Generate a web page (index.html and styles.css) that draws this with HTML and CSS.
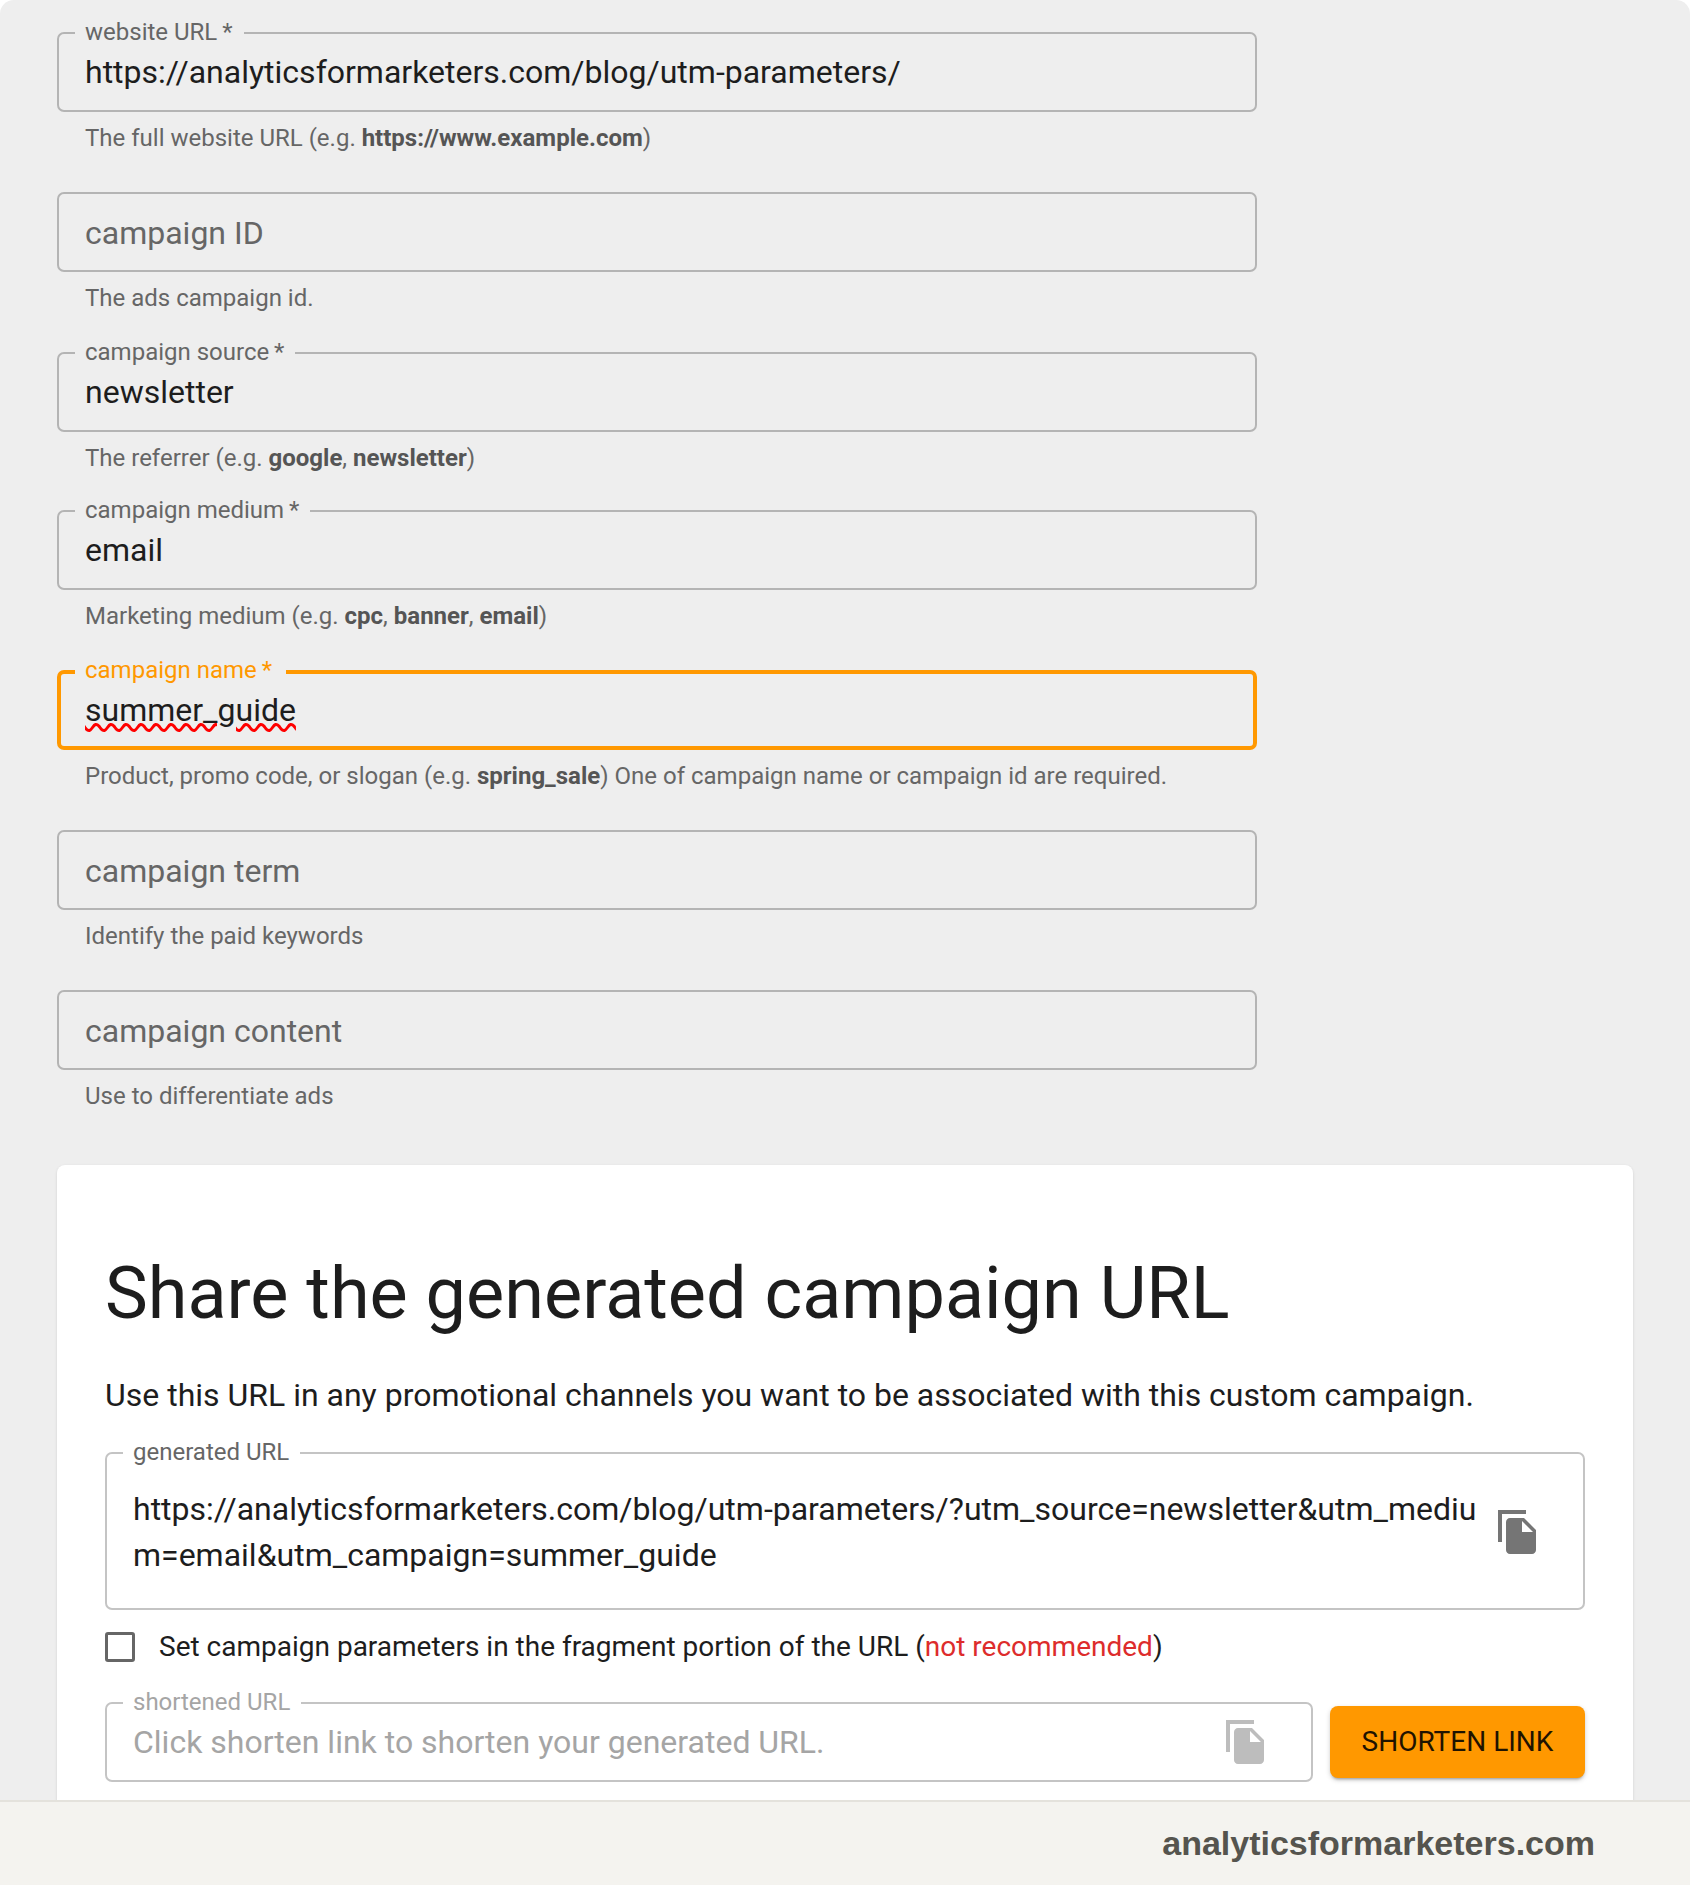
FILE: index.html
```html
<!DOCTYPE html>
<html lang="en">
  <head>
    <title>Campaign URL Builder</title>
    <link rel="stylesheet" href="styles.css">
  </head>

  <body>
    <div class="page">
      <main class="content">
        <form class="fields">
          <div class="group">
            <div class="field">
              <label class="field-label">website URL&thinsp;*</label>
              <span class="value">https://analyticsformarketers.com/blog/utm-parameters/</span>
            </div>
            <p class="helper">The full website URL (e.g. <b>https://www.example.com</b>)</p>
          </div>
          <div class="group">
            <div class="field">
              <span class="value empty">campaign ID</span>
            </div>
            <p class="helper">The ads campaign id.</p>
          </div>
          <div class="group">
            <div class="field">
              <label class="field-label">campaign source&thinsp;*</label>
              <span class="value">newsletter</span>
            </div>
            <p class="helper">The referrer (e.g. <b>google</b>, <b>newsletter</b>)</p>
          </div>
          <div class="group">
            <div class="field">
              <label class="field-label">campaign medium&thinsp;*</label>
              <span class="value">email</span>
            </div>
            <p class="helper">Marketing medium (e.g. <b>cpc</b>, <b>banner</b>, <b>email</b>)</p>
          </div>
          <div class="group">
            <div class="field focused">
              <label class="field-label">campaign name&thinsp;*</label>
              <span class="value misspelled">summer_guide</span>
            </div>
            <p class="helper">Product, promo code, or slogan (e.g. <b>spring_sale</b>) One of campaign name or campaign id are required.</p>
          </div>
          <div class="group">
            <div class="field">
              <span class="value empty">campaign term</span>
            </div>
            <p class="helper">Identify the paid keywords</p>
          </div>
          <div class="group">
            <div class="field">
              <span class="value empty">campaign content</span>
            </div>
            <p class="helper">Use to differentiate ads</p>
          </div>
        </form>

        <section class="card">
          <h2>Share the generated campaign URL</h2>
          <p class="lead">Use this URL in any promotional channels you want to be associated with this custom campaign.</p>

          <div class="field generated">
            <label class="field-label">generated URL</label>
            <span class="value">https://analyticsformarketers.com/blog/utm-parameters/?utm_source=newsletter&amp;utm_medium=email&amp;utm_campaign=summer_guide</span>
            <svg class="copy" viewBox="0 0 24 24"><path d="M16 1H2v16h2V3h12V1zm-1 4l6 6v10c0 1.1-.9 2-2 2H7.99C6.89 23 6 22.1 6 21l.01-14c0-1.1.89-2 1.99-2h7zm-1 7h5.5L14 6.5V12z"/></svg>
          </div>

          <div class="fragment">
            <span class="checkbox"></span>
            <span>Set campaign parameters in the fragment portion of the URL (<span class="warn">not recommended</span>)</span>
          </div>

          <div class="shorten">
            <div class="field disabled">
              <label class="field-label">shortened URL</label>
              <span class="value">Click shorten link to shorten your generated URL.</span>
              <svg class="copy" viewBox="0 0 24 24"><path d="M16 1H2v16h2V3h12V1zm-1 4l6 6v10c0 1.1-.9 2-2 2H7.99C6.89 23 6 22.1 6 21l.01-14c0-1.1.89-2 1.99-2h7zm-1 7h5.5L14 6.5V12z"/></svg>
            </div>
            <button type="button" class="shorten-btn">SHORTEN LINK</button>
          </div>
        </section>
      </main>

      <footer class="footer">analyticsformarketers.com</footer>
    </div>
  </body>
</html>
```

FILE: styles.css
```css
html {
  background-color: #fff;
}

body {
  margin: 0;
  font-family: Roboto, "Liberation Sans", sans-serif;
  color: #1d1d1d;
}

.page {
  display: flex;
  flex-flow: column;
  block-size: 1885px;
  border-radius: 14px 14px 0 0;
  overflow: hidden;
  background-color: #eee;
}

.content {
  flex: 1;
  min-block-size: 0;
  overflow: hidden;
  padding: 32px 58px 0 57px;
}

.fields {
  inline-size: 1200px;
}

.group {
  block-size: 160px;

  &:nth-child(3) {
    block-size: 158px;
  }
}

.field {
  position: relative;
  display: flex;
  align-items: center;
  box-sizing: border-box;
  block-size: 80px;
  padding-inline: 26px;
  border: 2px solid #b4b4b4;
  border-radius: 7px;
}

.field-label {
  position: absolute;
  top: -15px;
  left: 16px;
  padding-inline: 10px 11px;
  background-color: #eee;
  color: #666;
  font-size: 24px;
  line-height: 26px;
}

.value {
  font-size: 32px;
  line-height: 46px;
  margin-block-start: -1px;
}

.value.empty {
  color: #666;
  margin-block-start: 2px;
}

.misspelled {
  text-decoration: #f00 wavy underline;
  text-decoration-thickness: 3px;
  text-underline-offset: 2px;
}

.field.focused {
  border: 4px solid #ff9800;
  padding-inline: 24px;
}

.focused .field-label {
  top: -17px;
  left: 14px;
  padding-inline-end: 14px;
  color: #ff9800;
}

.helper {
  margin: 10px 0 0 28px;
  color: #666;
  font-size: 24px;
  line-height: 33px;

  b {
    color: #555;
    font-weight: 700;
  }
}

.card {
  box-sizing: border-box;
  inline-size: 1576px;
  margin-block-start: 15px;
  padding: 80px 48px 60px;
  border-radius: 8px;
  background-color: #fff;
  box-shadow: 0 1px 3px rgb(0 0 0 / 12%);

  .field {
    border-color: #c4c4c4;
  }

  .field-label {
    background-color: #fff;
  }

  h2 {
    margin: 0;
    font-size: 72px;
    font-weight: 400;
    line-height: 98px;
    color: #1d1d1d;
  }

  .lead {
    margin: 29px 0 0;
    font-size: 32px;
    line-height: 46px;
  }
}

.generated {
  block-size: 158px;
  margin-block-start: 34px;
  align-items: flex-start;
  padding-block-start: 32px;

  .value {
    flex: 1;
    word-break: break-all;
    margin: 0;
  }
}

.copy {
  flex: none;
  inline-size: 48px;
  block-size: 48px;
  fill: #757575;
}

.generated .copy {
  margin: 22px 15px 0 12px;
}

.fragment {
  display: flex;
  align-items: center;
  gap: 24px;
  margin-block-start: 18px;
  font-size: 28px;
  line-height: 38px;

  .warn {
    color: #dd2c2c;
  }
}

.checkbox {
  box-sizing: border-box;
  inline-size: 30px;
  block-size: 30px;
  border: 3px solid #666;
  border-radius: 3px;
}

.shorten {
  display: flex;
  align-items: center;
  gap: 17px;
  margin-block-start: 35.6px;

  .field {
    flex: 1;
    block-size: 80px;
    justify-content: space-between;
  }

  .value {
    margin: 0;
    color: #a5a5a5;
  }

  .field-label {
    color: #a5a5a5;
  }

  .copy {
    fill: #bdbdbd;
    margin-inline-end: 15px;
  }
}

.shorten-btn {
  inline-size: 255px;
  block-size: 72px;
  border: 0;
  border-radius: 8px;
  background-color: #ff9800;
  color: #1f1300;
  font: 400 28px Roboto, sans-serif;
  box-shadow: 0 3px 3px -2px rgb(0 0 0 / 30%), 0 2px 5px rgb(0 0 0 / 18%);
}

.footer {
  flex: none;
  box-sizing: border-box;
  block-size: 85px;
  padding-inline-end: 95px;
  border-block-start: 2px solid #e4e2dc;
  background-color: #f4f3ef;
  color: #55544e;
  font: 700 34px/83px "Liberation Sans", sans-serif;
  text-align: end;
}
```
